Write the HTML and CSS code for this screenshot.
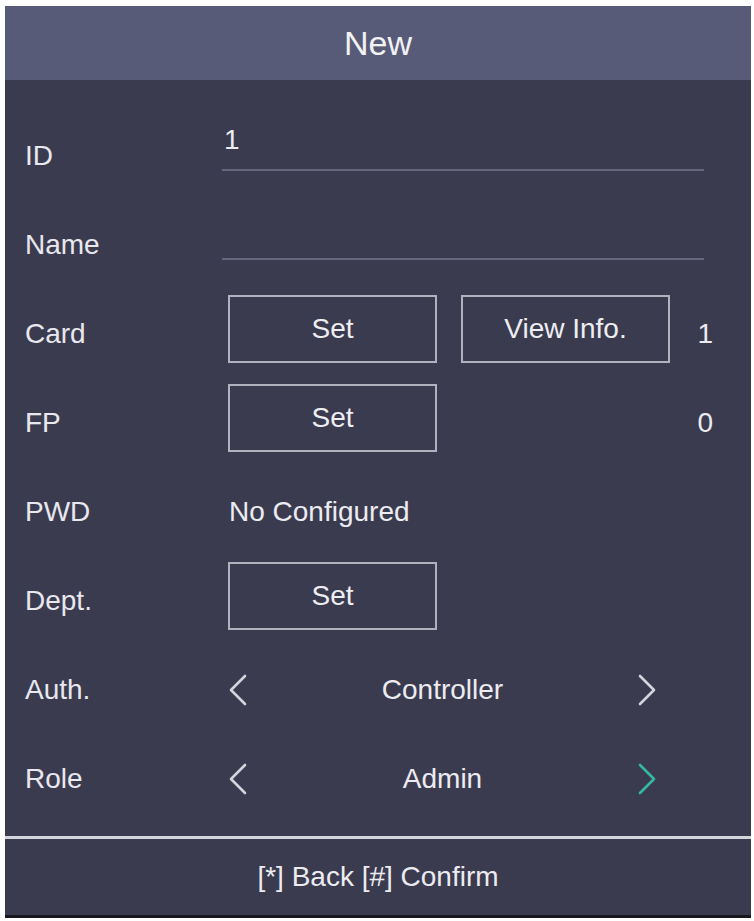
FILE: index.html
```html
<!DOCTYPE html>
<html lang="en">
<head>
<meta charset="utf-8">
<title>New</title>
<link rel="stylesheet" href="styles.css">
</head>
<body>
<div class="screen">
  <header class="title-bar">New</header>

  <main class="form">
    <div class="row">
      <span class="label">ID</span>
      <div class="field"><span class="field-value">1</span></div>
    </div>

    <div class="row">
      <span class="label">Name</span>
      <div class="field"></div>
    </div>

    <div class="row">
      <span class="label">Card</span>
      <div class="actions">
        <button class="btn" type="button">Set</button>
        <button class="btn" type="button">View Info.</button>
      </div>
      <span class="count">1</span>
    </div>

    <div class="row">
      <span class="label">FP</span>
      <div class="actions">
        <button class="btn" type="button">Set</button>
      </div>
      <span class="count">0</span>
    </div>

    <div class="row">
      <span class="label">PWD</span>
      <span class="value">No Configured</span>
    </div>

    <div class="row">
      <span class="label">Dept.</span>
      <div class="actions">
        <button class="btn" type="button">Set</button>
      </div>
    </div>

    <div class="row">
      <span class="label">Auth.</span>
      <div class="picker">
        <svg class="chevron" viewBox="0 0 20 32" aria-hidden="true"><path d="M17 2 L3 16 L17 30"/></svg>
        <span class="picker-value">Controller</span>
        <svg class="chevron" viewBox="0 0 20 32" aria-hidden="true"><path d="M3 2 L17 16 L3 30"/></svg>
      </div>
    </div>

    <div class="row">
      <span class="label">Role</span>
      <div class="picker">
        <svg class="chevron" viewBox="0 0 20 32" aria-hidden="true"><path d="M17 2 L3 16 L17 30"/></svg>
        <span class="picker-value">Admin</span>
        <svg class="chevron chevron-active" viewBox="0 0 20 32" aria-hidden="true"><path d="M3 2 L17 16 L3 30"/></svg>
      </div>
    </div>
  </main>

  <footer class="footer">[*] Back [#] Confirm</footer>
</div>
</body>
</html>
```

FILE: styles.css
```css
html, body {
  margin: 0;
  padding: 0;
  background: #ffffff;
}

body {
  font-family: "Liberation Sans", Arial, sans-serif;
  color: #ececf0;
}

.screen {
  margin: 6px 3px 0 5px;
  height: 912px;
  display: flex;
  flex-direction: column;
  background: #3b3b50;
  border-bottom: 3px solid #17171d;
  box-sizing: border-box;
}

.title-bar {
  flex: none;
  height: 74px;
  display: flex;
  align-items: center;
  justify-content: center;
  background: #585b78;
  font-size: 34px;
  color: #f2f2f5;
}

.form {
  flex: 1;
  padding-top: 31px;
  box-sizing: border-box;
}

.row {
  height: 89px;
  display: flex;
  align-items: center;
  padding: 0 38px 0 20px;
  font-size: 28px;
}

.label {
  flex: none;
  width: 197px;
  color: #e8e8ee;
}

/* text input drawn as an underline */
.field {
  flex: 1;
  align-self: flex-start;
  margin: 14px 9px 0 0;
  height: 46px;
  box-sizing: border-box;
  border-bottom: 2px solid #66677f;
}

.field-value {
  display: block;
  padding-left: 2px;
  line-height: 30px;
}

.actions {
  display: flex;
  gap: 24px;
  margin: 0 0 10px 6px;
}

.btn {
  width: 209px;
  height: 68px;
  padding: 0;
  border: 2px solid #b2b2be;
  background: transparent;
  color: #eeeef2;
  font-family: inherit;
  font-size: 28px;
  box-sizing: border-box;
}

.count {
  margin-left: auto;
}

.value {
  margin-left: 7px;
}

.picker {
  width: 429px;
  margin-left: 6px;
  display: flex;
  align-items: center;
  justify-content: space-between;
}

.picker-value {
  flex: 1;
  text-align: center;
}

.chevron {
  width: 20px;
  height: 32px;
  flex: none;
  fill: none;
  stroke: #d4d4dc;
  stroke-width: 2.6;
  stroke-linecap: round;
  stroke-linejoin: round;
}

.chevron-active {
  stroke: #33b8a2;
}

.footer {
  flex: none;
  height: 79px;
  display: flex;
  align-items: center;
  justify-content: center;
  border-top: 3px solid #d4d4dc;
  box-sizing: border-box;
  font-size: 28px;
  color: #ececf0;
}
```
